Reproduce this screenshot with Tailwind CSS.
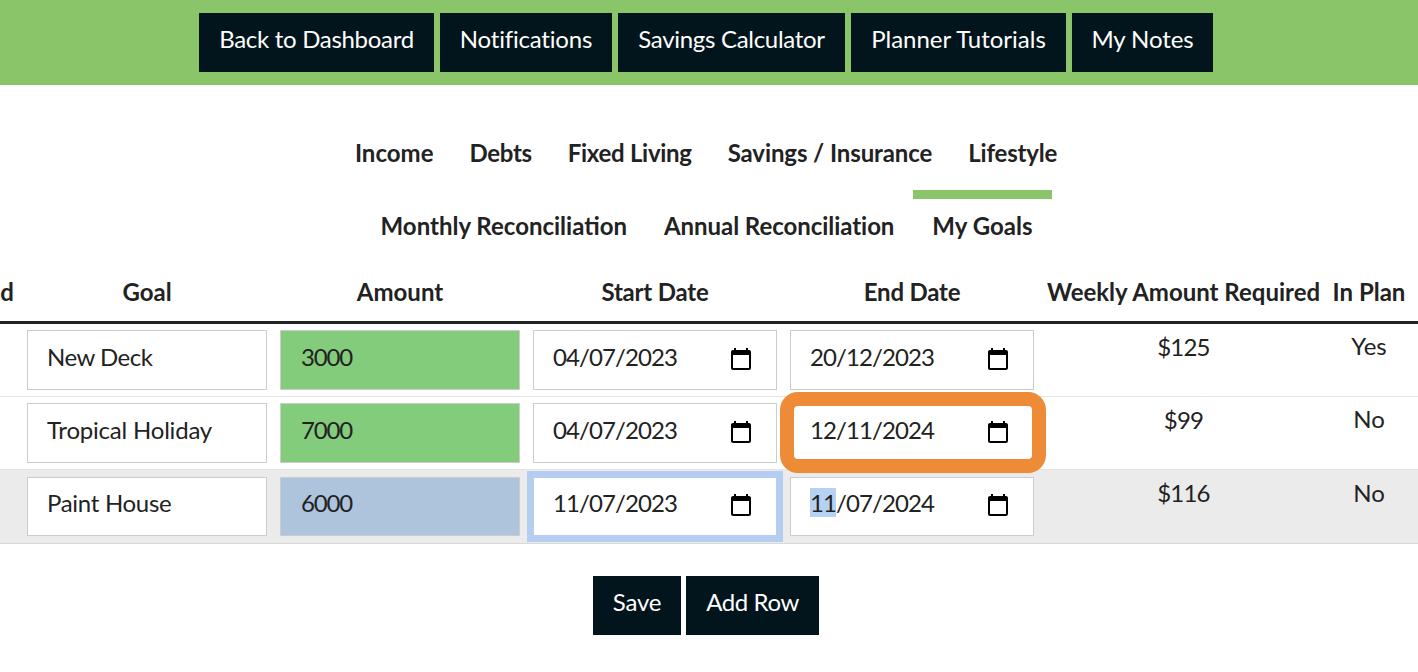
<!DOCTYPE html>
<html lang="en">
<head>
    <meta charset="UTF-8">
    <title>My Goals</title>
    <script src="https://cdn.jsdelivr.net/npm/@tailwindcss/browser@4"></script>
</head>
<body class="bg-white font-['Lato',sans-serif] text-[24px] text-[#222] overflow-hidden h-[672px]">
    <!-- top nav -->
    <nav class="bg-[#8bc56a] h-[85px] pt-[13px] pr-[6px] flex justify-center gap-[6px]">
        <a class="w-[235px] h-[59px] pb-[7px] flex items-center justify-center bg-[#02151c] text-white tracking-[-0.3px]">Back to Dashboard</a>
        <a class="w-[172px] h-[59px] pb-[7px] flex items-center justify-center bg-[#02151c] text-white tracking-[-0.2px]">Notifications</a>
        <a class="w-[227px] h-[59px] pb-[7px] flex items-center justify-center bg-[#02151c] text-white tracking-[-0.3px]">Savings Calculator</a>
        <a class="w-[215px] h-[59px] pb-[7px] flex items-center justify-center bg-[#02151c] text-white">Planner Tutorials</a>
        <a class="w-[141px] h-[59px] pb-[7px] flex items-center justify-center bg-[#02151c] text-white tracking-[-0.1px]">My Notes</a>
    </nav>

    <!-- planner tabs -->
    <div class="pt-[32px] font-bold">
        <div class="flex justify-center pr-[6px]">
            <a class="h-[73px] px-[18px] pb-[10px] border-t-[9px] border-transparent flex items-center">Income</a>
            <a class="h-[73px] px-[18px] pb-[10px] border-t-[9px] border-transparent flex items-center tracking-[-0.3px]">Debts</a>
            <a class="h-[73px] px-[18px] pb-[10px] border-t-[9px] border-transparent flex items-center tracking-[-0.3px]">Fixed Living</a>
            <a class="h-[73px] px-[18px] pb-[10px] border-t-[9px] border-transparent flex items-center tracking-[-0.1px]">Savings / Insurance</a>
            <a class="h-[73px] px-[18px] pb-[10px] border-t-[9px] border-transparent flex items-center tracking-[-0.2px]">Lifestyle</a>
        </div>
        <div class="flex justify-center pr-[4px]">
            <a class="h-[73px] px-[18.5px] pb-[10px] border-t-[9px] border-transparent flex items-center">Monthly Reconciliation</a>
            <a class="h-[73px] px-[18.5px] pb-[10px] border-t-[9px] border-transparent flex items-center tracking-[-0.05px]">Annual Reconciliation</a>
            <a class="h-[73px] px-[19.5px] pb-[10px] border-t-[9px] border-[#8bc56a] flex items-center">My Goals</a>
        </div>
    </div>

    <!-- goals table, the first column runs off the left edge -->
    <div class="overflow-hidden">
        <table class="table-fixed border-collapse w-[1538px] -ml-[120px]">
            <colgroup>
                <col class="w-[140.5px]">
                <col class="w-[253px]">
                <col class="w-[253px]">
                <col class="w-[257px]">
                <col class="w-[257px]">
                <col class="w-[286px]">
                <col class="w-[85px]">
                <col class="w-[6.5px]">
            </colgroup>
            <thead>
                <tr class="h-[59px] border-b-[3px] border-[#222] font-bold">
                    <th class="text-right pr-[6.5px] whitespace-nowrap">Achieved</th>
                    <th>Goal</th>
                    <th>Amount</th>
                    <th class="tracking-[-0.2px]">Start Date</th>
                    <th class="tracking-[-0.2px]">End Date</th>
                    <th class="whitespace-nowrap">Weekly Amount Required</th>
                    <th class="whitespace-nowrap">In Plan</th>
                    <th></th>
                </tr>
            </thead>
            <tbody>
                <tr class="border-b border-[#e4e4e4] align-top">
                    <td></td>
                    <td class="px-[6.5px] py-[6px]"><input value="New Deck" class="w-full h-[60px] px-[19px] pb-[7px] border border-[#ccc] bg-white tracking-[-0.5px]"></td>
                    <td class="px-[6.5px] py-[6px]"><input value="3000" class="w-full h-[60px] px-[20px] pb-[7px] border border-[#ccc] bg-[#82cc7c] tracking-[-1.2px]"></td>
                    <td class="px-[6.5px] py-[6px]">
                        <div class="h-[60px] pl-[19px] pr-[23px] pb-[5px] border border-[#ccc] bg-white flex items-center justify-between">
                            <span class="tracking-[-0.9px]">04/07/2023</span>
                            <svg class="w-[24px] h-[24px] mt-[3px]" viewBox="0 0 24 24"><path d="M20 3h-1V1h-2v2H7V1H5v2H4c-1.1 0-2 .9-2 2v16c0 1.1.9 2 2 2h16c1.1 0 2-.9 2-2V5c0-1.1-.9-2-2-2zm0 18H4V8h16v13z"/></svg>
                        </div>
                    </td>
                    <td class="px-[6.5px] py-[6px]">
                        <div class="h-[60px] pl-[19px] pr-[23px] pb-[5px] border border-[#ccc] bg-white flex items-center justify-between">
                            <span class="tracking-[-0.9px]">20/12/2023</span>
                            <svg class="w-[24px] h-[24px] mt-[3px]" viewBox="0 0 24 24"><path d="M20 3h-1V1h-2v2H7V1H5v2H4c-1.1 0-2 .9-2 2v16c0 1.1.9 2 2 2h16c1.1 0 2-.9 2-2V5c0-1.1-.9-2-2-2zm0 18H4V8h16v13z"/></svg>
                        </div>
                    </td>
                    <td class="text-center pt-[5px] tracking-[-0.8px]">$125</td>
                    <td class="text-center pt-[4px]">Yes</td>
                    <td></td>
                </tr>
                <tr class="border-b border-[#e4e4e4] align-top">
                    <td></td>
                    <td class="px-[6.5px] py-[6px]"><input value="Tropical Holiday" class="w-full h-[60px] px-[19px] pb-[7px] border border-[#ccc] bg-white tracking-[-0.2px]"></td>
                    <td class="px-[6.5px] py-[6px]"><input value="7000" class="w-full h-[60px] px-[20px] pb-[7px] border border-[#ccc] bg-[#82cc7c] tracking-[-1.2px]"></td>
                    <td class="px-[6.5px] py-[6px]">
                        <div class="h-[60px] pl-[19px] pr-[23px] pb-[5px] border border-[#ccc] bg-white flex items-center justify-between">
                            <span class="tracking-[-0.9px]">04/07/2023</span>
                            <svg class="w-[24px] h-[24px] mt-[3px]" viewBox="0 0 24 24"><path d="M20 3h-1V1h-2v2H7V1H5v2H4c-1.1 0-2 .9-2 2v16c0 1.1.9 2 2 2h16c1.1 0 2-.9 2-2V5c0-1.1-.9-2-2-2zm0 18H4V8h16v13z"/></svg>
                        </div>
                    </td>
                    <td class="px-[6.5px] py-[6px]">
                        <div class="relative h-[60px] pl-[19px] pr-[23px] pb-[5px] border border-[#ccc] bg-white flex items-center justify-between">
                            <span class="tracking-[-0.9px]">12/11/2024</span>
                            <svg class="w-[24px] h-[24px] mt-[3px]" viewBox="0 0 24 24"><path d="M20 3h-1V1h-2v2H7V1H5v2H4c-1.1 0-2 .9-2 2v16c0 1.1.9 2 2 2h16c1.1 0 2-.9 2-2V5c0-1.1-.9-2-2-2zm0 18H4V8h16v13z"/></svg>
                            <!-- orange annotation around the field -->
                            <div class="absolute -left-[11px] -right-[13px] -top-[12px] -bottom-[11px] border-[14px] border-[#ed8b36] rounded-[18px]"></div>
                        </div>
                    </td>
                    <td class="text-center pt-[5px] tracking-[-0.8px]">$99</td>
                    <td class="text-center pt-[4px]">No</td>
                    <td></td>
                </tr>
                <tr class="border-b border-[#d8d8d8] bg-[#ebebeb] align-top">
                    <td></td>
                    <td class="px-[6.5px] py-[7px]"><input value="Paint House" class="w-full h-[59px] px-[19px] pb-[7px] border border-[#ccc] bg-white tracking-[-0.3px]"></td>
                    <td class="px-[6.5px] py-[7px]"><input value="6000" class="w-full h-[59px] px-[20px] pb-[7px] border border-[#ccc] bg-[#adc4dc] tracking-[-1.2px]"></td>
                    <td class="px-[6.5px] py-[7px]">
                        <div class="h-[59px] pl-[19px] pr-[23px] pb-[7px] border border-[#b4cdf0] ring-[6px] ring-[#b4cdf0] bg-white flex items-center justify-between">
                            <span class="tracking-[-0.9px]">11/07/2023</span>
                            <svg class="w-[24px] h-[24px] mt-[5px]" viewBox="0 0 24 24"><path d="M20 3h-1V1h-2v2H7V1H5v2H4c-1.1 0-2 .9-2 2v16c0 1.1.9 2 2 2h16c1.1 0 2-.9 2-2V5c0-1.1-.9-2-2-2zm0 18H4V8h16v13z"/></svg>
                        </div>
                    </td>
                    <td class="px-[6.5px] py-[7px]">
                        <div class="h-[59px] pl-[19px] pr-[23px] pb-[7px] border border-[#ccc] bg-white flex items-center justify-between">
                            <span class="tracking-[-0.9px]"><span class="bg-[#b6d2f3]">11</span>/07/2024</span>
                            <svg class="w-[24px] h-[24px] mt-[5px]" viewBox="0 0 24 24"><path d="M20 3h-1V1h-2v2H7V1H5v2H4c-1.1 0-2 .9-2 2v16c0 1.1.9 2 2 2h16c1.1 0 2-.9 2-2V5c0-1.1-.9-2-2-2zm0 18H4V8h16v13z"/></svg>
                        </div>
                    </td>
                    <td class="text-center pt-[5px] tracking-[-0.8px]">$116</td>
                    <td class="text-center pt-[5px]">No</td>
                    <td></td>
                </tr>
            </tbody>
        </table>
    </div>

    <div class="mt-[32px] pr-[6px] flex justify-center gap-[5px]">
        <button class="w-[88px] h-[59px] pb-[7px] bg-[#02151c] text-white tracking-[-0.2px]">Save</button>
        <button class="w-[133px] h-[59px] pb-[7px] bg-[#02151c] text-white tracking-[-0.4px]">Add Row</button>
    </div>
</body>
</html>
